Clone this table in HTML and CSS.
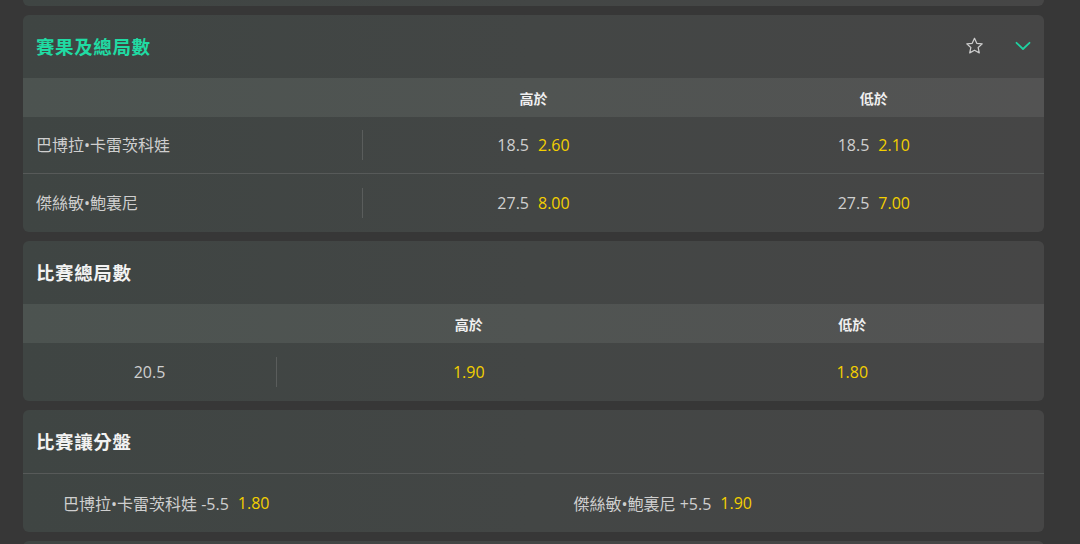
FILE: index.html
```html
<!DOCTYPE html>
<html lang="zh-Hant">
<head>
<meta charset="utf-8">
<link rel="stylesheet" href="styles.css">
</head>
<body>
<div class="list">
  <div class="card stub-top"></div>

  <section class="card">
    <div class="card-head">
      <h2 class="title title-active">賽果及總局數</h2>
      <div class="head-icons">
        <svg class="icon-star" width="21" height="20" viewBox="0 0 24 24"><path d="M12 2.8l2.75 5.95 6.5.72-4.85 4.42 1.35 6.41L12 17.05 6.25 20.3l1.35-6.41L2.75 9.47l6.5-.72z" fill="none" stroke="#cdcdcd" stroke-width="1.5" stroke-linejoin="round"/></svg>
        <svg class="icon-chev" width="16" height="10" viewBox="0 0 16 10"><path d="M1.5 1.8l6.5 6.2 6.5-6.2" fill="none" stroke="#1ed1a0" stroke-width="1.8" stroke-linecap="round" stroke-linejoin="round"/></svg>
      </div>
    </div>
    <div class="grid3 colhead">
      <div></div>
      <div class="ch">高於</div>
      <div class="ch">低於</div>
    </div>
    <div class="grid3 row">
      <div class="label divided">巴博拉•卡雷茨科娃</div>
      <div class="cell"><span class="line">18.5</span><span class="odd">2.60</span></div>
      <div class="cell"><span class="line">18.5</span><span class="odd">2.10</span></div>
    </div>
    <div class="grid3 row row-sep">
      <div class="label divided">傑絲敏•鮑裏尼</div>
      <div class="cell"><span class="line">27.5</span><span class="odd">8.00</span></div>
      <div class="cell"><span class="line">27.5</span><span class="odd">7.00</span></div>
    </div>
  </section>

  <section class="card">
    <div class="card-head">
      <h2 class="title">比賽總局數</h2>
    </div>
    <div class="gridq colhead">
      <div></div>
      <div class="ch">高於</div>
      <div class="ch">低於</div>
    </div>
    <div class="gridq row row-last">
      <div class="cell divided"><span class="line">20.5</span></div>
      <div class="cell"><span class="odd">1.90</span></div>
      <div class="cell"><span class="odd">1.80</span></div>
    </div>
  </section>

  <section class="card">
    <div class="card-head head-sep">
      <h2 class="title">比賽讓分盤</h2>
    </div>
    <div class="grid2 row row-last">
      <div class="hcp"><span class="line">巴博拉•卡雷茨科娃 -5.5</span><span class="odd">1.80</span></div>
      <div class="hcp"><span class="line">傑絲敏•鮑裏尼 +5.5</span><span class="odd">1.90</span></div>
    </div>
  </section>

  <div class="card stub-bottom"></div>
</div>
</body>
</html>
```

FILE: styles.css
```css
* { box-sizing: border-box; }
html, body { margin: 0; padding: 0; }
body {
  background: #373737;
  width: 1080px;
  height: 544px;
  overflow: hidden;
  font-family: "Open Sans", "Noto Sans CJK TC", sans-serif;
  color: #cfcfcf;
}
.list {
  display: flex;
  flex-direction: column;
  gap: 9px;
  padding: 0 36px 0 23px;
}
.card {
  background: linear-gradient(90deg, #3f4543 0%, #434645 50%, #464646 100%);
  border-radius: 6px;
  overflow: hidden;
}
.stub-top { height: 6px; border-radius: 0 0 6px 6px; }
.stub-bottom { height: 20px; }

.card-head {
  height: 63px;
  display: flex;
  align-items: center;
  justify-content: space-between;
  padding: 0 13px;
}
.head-sep { border-bottom: 1px solid #575a59; height: 64px; }
.title {
  margin: 0 0 1px;
  font-family: "Noto Sans CJK TC", sans-serif;
  font-size: 18.5px;
  font-weight: 700;
  color: #f2f2f2;
  letter-spacing: 0.6px;
}
.title-active { color: #20dba3; }
.head-icons {
  display: flex;
  align-items: center;
  gap: 30px;
  margin-bottom: 2px;
}
.icon-star { display: block; }
.icon-chev { display: block; }

.grid3 { display: grid; grid-template-columns: 1fr 1fr 1fr; }
.gridq { display: grid; grid-template-columns: 254px 1fr 1fr; }
.grid2 { display: grid; grid-template-columns: 1fr 1fr; }

.colhead {
  height: 39px;
  background: linear-gradient(90deg, #4c5350 0%, #505452 50%, #535353 100%);
  align-items: center;
}
.ch {
  text-align: center;
  font-family: "Noto Sans CJK TC", sans-serif;
  font-size: 14px;
  font-weight: 700;
  color: #f0f0f0;
}
.row {
  height: 56px;
  align-items: center;
}
.row-last { height: 58px; }
.row-sep { border-top: 1px solid #575a59; height: 59px; }

.label {
  padding-left: 13px;
  padding-bottom: 2px;
  font-family: "Open Sans", "Noto Sans CJK TC", sans-serif;
  font-size: 16px;
  color: #cfcfcf;
}
.divided {
  height: 30px;
  display: flex;
  align-items: center;
  border-right: 1px solid #5a5d5c;
}
.cell {
  display: flex;
  justify-content: center;
  align-items: center;
  gap: 9px;
  font-size: 16px;
}
.line { color: #cfcfcf; }
.odd { color: #f3cf00; }
.hcp {
  display: flex;
  align-items: center;
  gap: 9px;
  padding-left: 40px;
  font-size: 16px;
}
```
